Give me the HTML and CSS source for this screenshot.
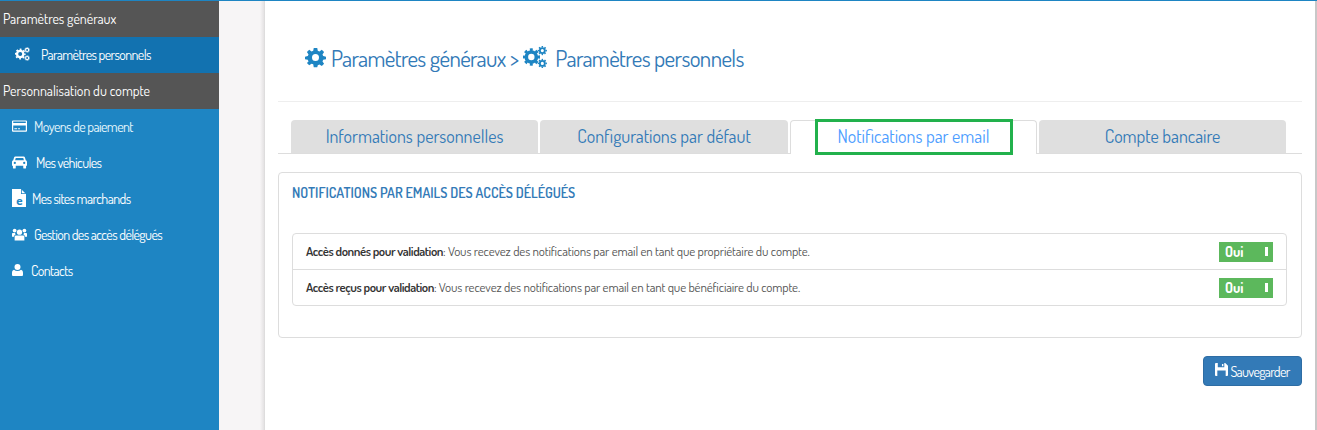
FILE: index.html
```html
<!DOCTYPE html>
<html lang="fr">
<head>
    <meta charset="UTF-8">
    <title>Paramètres personnels</title>
    <link rel="stylesheet" href="styles.css">
</head>
<body>
    <svg class="icon-defs" width="0" height="0">
        <symbol id="gear" viewBox="0 0 24 24">
            <path fill-rule="evenodd" d="M10 1h4l.6 3.200 1.900.8 2.700-1.800 2.600 2.600L20 8.500l.8 1.900L24 11v3l-3.200.6-.8 1.900 1.800 2.700-2.600 2.600-2.700-1.800-1.900.8L14 23h-4l-.6-3.200-1.900-.8-2.700 1.800-2.600-2.600L4 16.500l-.8-1.900L0 14v-3l3.200-.6.800-1.900-1.800-2.700 2.600-2.600L7.500 5l1.900-.8zM12 8a4 4 0 1 0 0 8 4 4 0 0 0 0-8z"/>
        </symbol>
        <symbol id="gears" viewBox="0 0 26 24">
            <g fill="none" stroke="currentColor">
                <circle cx="9" cy="12" r="5.500" stroke-width="4"/>
                <circle cx="9" cy="12" r="8" stroke-width="3" pathLength="16" stroke-dasharray="1 1" stroke-dashoffset="0.5"/>
                <circle cx="21" cy="5" r="2.700" stroke-width="2"/>
                <circle cx="21" cy="5" r="4.200" stroke-width="1.600" pathLength="16" stroke-dasharray="1 1" stroke-dashoffset="0.5"/>
                <circle cx="21" cy="19" r="2.700" stroke-width="2"/>
                <circle cx="21" cy="19" r="4.200" stroke-width="1.600" pathLength="16" stroke-dasharray="1 1" stroke-dashoffset="0.5"/>
            </g>
        </symbol>
    </svg>

    <div class="page">
        <div class="sidebar">
            <div class="side-head">Paramètres généraux</div>
            <div class="side-item side-current">
                <svg class="side-gears"><use href="#gears"/></svg>
                <span>Paramètres personnels</span>
            </div>
            <div class="side-head">Personnalisation du compte</div>
            <div class="side-item">
                <svg class="side-icon" viewBox="0 0 16 12"><path fill-rule="evenodd" d="M1 0h14a1 1 0 0 1 1 1v10a1 1 0 0 1-1 1H1a1 1 0 0 1-1-1V1a1 1 0 0 1 1-1zM1.300 1.300v1.500h13.400V1.300zM1.300 5.500v5.200h13.400V5.500zM2.500 8.500h3v1h-3zM6.500 8.500h2v1h-2z"/></svg>
                <span class="side-pay">Moyens de paiement</span>
            </div>
            <div class="side-item">
                <svg class="side-icon side-car-icon" viewBox="0 0 16 13"><path fill-rule="evenodd" d="M3.500 0h9c.6 0 1 .4 1.200 1l1 3c.8.300 1.300 1 1.300 1.800V10h-1v2a1 1 0 0 1-1 1h-1a1 1 0 0 1-1-1v-2H4v2a1 1 0 0 1-1 1H2a1 1 0 0 1-1-1v-2H0V5.800C0 5 .5 4.300 1.300 4l1-3c.2-.6.6-1 1.200-1zM4 1.800 3.300 4h9.400L12 1.800zM3 5.800a1.200 1.200 0 1 0 0 2.400 1.200 1.200 0 0 0 0-2.400zM13 5.800a1.200 1.200 0 1 0 0 2.400 1.200 1.200 0 0 0 0-2.400z"/></svg>
                <span class="side-car">Mes véhicules</span>
            </div>
            <div class="side-item">
                <svg class="side-file" viewBox="0 0 14 18"><path d="M0 0h9l5 5v13H0z"/><path class="side-file-e" d="M9.800 0v4.200H14V5H9V0z"/><text x="7" y="15.500" text-anchor="middle" class="side-file-e">e</text></svg>
                <span class="side-shop">Mes sites marchands</span>
            </div>
            <div class="side-item">
                <svg class="side-icon side-group" viewBox="0 0 16 13"><circle cx="8" cy="4" r="2.800"/><circle cx="2.800" cy="2.300" r="2"/><circle cx="13.200" cy="2.300" r="2"/><path d="M4.200 7.500h7.600c.8 0 1.400.7 1.400 1.500v4H2.800V9c0-.8.600-1.500 1.400-1.500z"/><path d="M0 9V6c0-.6.500-1 1-1h2.300c0 .8.300 1.200.7 1.600-1 .3-1.800 1.100-1.800 2.400zM16 9V6c0-.6-.5-1-1-1h-2.300c0 .8-.3 1.200-.7 1.600 1 .3 1.800 1.100 1.800 2.400z"/></svg>
                <span class="side-access">Gestion des accès délégués</span>
            </div>
            <div class="side-item">
                <svg class="side-person" viewBox="0 0 11 12"><circle cx="5.500" cy="3" r="3"/><path d="M2 5.800c.9.800 2.100 1.200 3.500 1.200S8.100 6.600 9 5.800c1.300.3 2 1.500 2 3.200V11a1 1 0 0 1-1 1H1a1 1 0 0 1-1-1V9c0-1.700.7-2.900 2-3.200z"/></svg>
                <span>Contacts</span>
            </div>
        </div>

        <div class="gutter"></div>

        <div class="main">
            <h1 class="title">
                <svg class="title-gear"><use href="#gear"/></svg>
                <span>Paramètres généraux &gt;</span>
                <svg class="title-gears"><use href="#gears"/></svg>
                <span>Paramètres personnels</span>
            </h1>

            <div class="tabs">
                <div class="tab tab-info">Informations personnelles</div>
                <div class="tab tab-conf">Configurations par défaut</div>
                <div class="tab tab-active"><span class="tab-mark">Notifications par email</span></div>
                <div class="tab tab-bank">Compte bancaire</div>
            </div>

            <div class="panel">
                <div class="panel-title">NOTIFICATIONS PAR EMAILS DES ACCÈS DÉLÉGUÉS</div>
                <div class="rows">
                    <div class="row">
                        <div><b>Accès donnés pour validation</b>: Vous recevez des notifications par email en tant que propriétaire du compte.</div>
                        <div class="switch"><span>Oui</span><i class="knob"></i></div>
                    </div>
                    <div class="row">
                        <div><b>Accès reçus pour validation</b>: Vous recevez des notifications par email en tant que bénéficiaire du compte.</div>
                        <div class="switch"><span>Oui</span><i class="knob"></i></div>
                    </div>
                </div>
            </div>

            <div class="actions">
                <button class="save">
                    <svg class="save-icon" viewBox="0 0 14 14"><path fill-rule="evenodd" d="M1 0h10l3 3v10a1 1 0 0 1-1 1H1a1 1 0 0 1-1-1V1a1 1 0 0 1 1-1zM3 0v4.500h7V0zM7.500 1h1.500v2.500H7.500zM2.500 8v6h9V8z"/></svg>
                    Sauvegarder
                </button>
            </div>
        </div>
    </div>
</body>
</html>
```

FILE: styles.css
```css
* {
    box-sizing: border-box;
}
html, body {
    height: 100%;
    margin: 0;
    overflow: hidden;
}
body {
    font-family: Dosis, "Open Sans", sans-serif;
    background-color: #fff;
    border-top: 1px solid #1e85c3;
}
.icon-defs {
    position: absolute;
}
.page {
    display: flex;
    height: 100%;
}

/* menu de gauche */
.sidebar {
    width: 219px;
    flex-shrink: 0;
    background-color: #1e85c3;
    color: #fff;
    font-size: 14px;
}
.side-head {
    height: 36px;
    line-height: 36px;
    padding-left: 3px;
    background-color: #555;
}
.side-item {
    display: flex;
    align-items: center;
    height: 36px;
    padding-left: 12px;
    padding-bottom: 2px;
    letter-spacing: -0.6px;
}
.side-item svg {
    color: #fff;
    fill: #fff;
    flex-shrink: 0;
}
.side-current {
    background-color: #1272b0;
    padding-left: 15px;
}
.side-gears {
    width: 15px;
    height: 14px;
    margin-right: 11px;
}
.side-icon {
    width: 15px;
    height: 12px;
}
.side-car-icon,
.side-group {
    height: 13px;
}
.side-file {
    width: 14px;
    height: 18px;
}
.side-person {
    width: 11px;
    height: 12px;
}
.side-item svg .side-file-e {
    fill: #1e85c3;
    font-size: 13px;
    font-weight: bold;
}
.side-pay { margin-left: 7px; color: #e4f6fc; }
.side-car { margin-left: 9px; }
.side-shop { margin-left: 6px; }
.side-access { margin-left: 7px; }
.side-person + span { margin-left: 8px; }

.gutter {
    width: 46px;
    flex-shrink: 0;
    background: linear-gradient(to right, #f7f5f6 41px, #e4e2e3 45px, #d8d8d8);
}

.main {
    flex: 1;
    border-right: 2px solid #c8c8c8;
    padding: 0 13px;
    color: #337ab7;
}
.title {
    display: flex;
    align-items: center;
    height: 101px;
    margin: 0;
    padding: 12px 0 0 27px;
    font-size: 23px;
    font-weight: normal;
    letter-spacing: -0.6px;
    border-bottom: 1px solid #eee;
}
.title svg {
    color: #1e85c3;
    fill: #1e85c3;
}
.title-gear {
    width: 21px;
    height: 21px;
    margin-right: 5px;
}
.title-gears {
    width: 24px;
    height: 22px;
    margin-left: 5px;
    margin-right: 8px;
}

.tabs {
    display: flex;
    height: 52px;
    padding: 18px 16px 0 13px;
    border-bottom: 1px solid #ddd;
    font-size: 18px;
}
.tab {
    display: flex;
    align-items: center;
    justify-content: center;
    height: 33px;
    padding-bottom: 2px;
    margin-right: 2px;
    background-color: #dfdfdf;
    border-radius: 4px 4px 0 0;
}
.tab-info { width: 247px; }
.tab-conf { width: 248px; }
.tab-active {
    width: 247px;
    height: 34px;
    padding-bottom: 0;
    background-color: #fff;
    border: 1px solid #ddd;
    border-bottom: 0;
    color: #4c9dff;
}
.tab-bank { width: 247px; margin-right: 0; }
.tab-mark {
    display: block;
    width: 198px;
    height: 36px;
    line-height: 29px;
    margin-top: -1px;
    text-align: center;
    border: 3px solid #22b14c;
}

.panel {
    height: 166px;
    margin-top: 18px;
    padding: 0 14px 0 13px;
    border: 1px solid #ddd;
    border-radius: 4px;
}
.panel-title {
    height: 60px;
    padding-top: 11px;
    font-size: 14px;
    font-weight: 600;
}
.rows {
    border: 1px solid #ddd;
    border-radius: 4px;
    font-size: 13px;
    letter-spacing: -0.13px;
    color: #555;
}
.row {
    display: flex;
    align-items: center;
    justify-content: space-between;
    height: 35px;
    padding: 0 13px;
}
.row + .row {
    height: 36px;
    border-top: 1px solid #ddd;
}
.row > div:first-child {
    padding-bottom: 2px;
}
.row b {
    font-weight: 600;
    letter-spacing: -0.45px;
    color: #333;
}
.switch {
    display: flex;
    align-items: center;
    justify-content: space-between;
    width: 54px;
    height: 20px;
    padding: 0 5px 0 6px;
    background-color: #5cb85c;
    color: #fff;
    font-size: 14px;
    font-weight: bold;
    letter-spacing: 0;
}
.knob {
    width: 3px;
    height: 9px;
    background-color: #fff;
}

.actions {
    display: flex;
    justify-content: flex-end;
    margin-top: 18px;
}
.save {
    display: flex;
    align-items: center;
    justify-content: center;
    gap: 2px;
    width: 99px;
    height: 30px;
    padding: 0;
    background-color: #337ab7;
    border: 1px solid #2e6da4;
    border-radius: 4px;
    color: #fff;
    font-family: inherit;
    font-size: 14px;
    letter-spacing: -0.7px;
}
.save-icon {
    width: 13px;
    height: 13px;
    fill: #fff;
    margin-top: -4px;
}
```
